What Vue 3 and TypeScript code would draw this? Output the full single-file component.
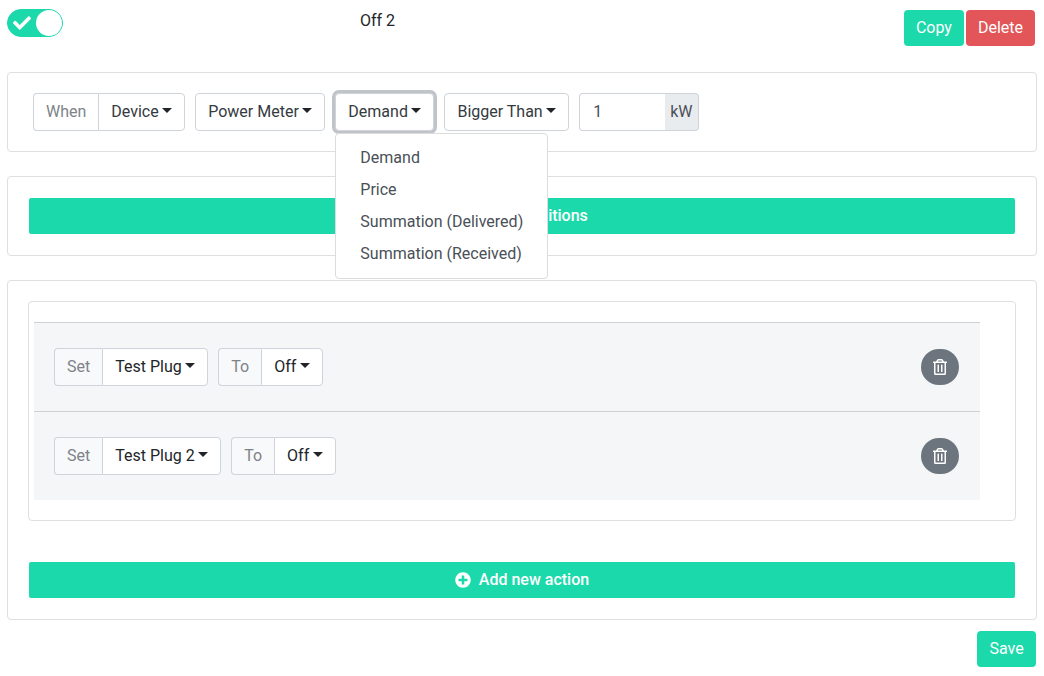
<script setup lang="ts">
interface Row { device: string }
const rows: Row[] = [{ device: 'Test Plug' }, { device: 'Test Plug 2' }]
const menu: string[] = ['Demand', 'Price', 'Summation (Delivered)', 'Summation (Received)']
</script>

<template>
  <div class="page">
    <header class="top">
      <div class="toggle">
        <svg class="check" viewBox="0 0 512 512" width="18" height="18"><path fill="#fff" d="M173.9 439.4 7.5 273c-10-10-10-26.200 0-36.200l36.200-36.200c10-10 26.200-10 36.200 0L192 312.700 432.100 72.600c10-10 26.200-10 36.200 0l36.200 36.200c10 10 10 26.200 0 36.200L210.100 439.400c-10 10-26.200 10-36.200 0z"/></svg>
        <span class="knob"></span>
      </div>
      <div class="title">Off 2</div>
      <div class="top-actions">
        <button class="btn green">Copy</button>
        <button class="btn red">Delete</button>
      </div>
    </header>

    <section class="card when">
      <div class="group">
        <span class="addon">When</span>
        <button class="sel joined">Device<i class="caret"></i></button>
      </div>
      <button class="sel">Power Meter<i class="caret"></i></button>
      <div class="drop">
        <button class="sel focused">Demand<i class="caret"></i></button>
        <ul class="menu">
          <li v-for="m in menu" :key="m">{{ m }}</li>
        </ul>
      </div>
      <button class="sel">Bigger Than<i class="caret"></i></button>
      <div class="group">
        <span class="value">1</span>
        <span class="unit">kW</span>
      </div>
    </section>

    <section class="card cond">
      <button class="wide">
        <svg viewBox="0 0 512 512" width="16" height="16"><path fill="#fff" d="M256 8C119 8 8 119 8 256s111 248 248 248 248-111 248-248S393 8 256 8zm144 276c0 6.600-5.400 12-12 12h-92v92c0 6.600-5.400 12-12 12h-56c-6.600 0-12-5.400-12-12v-92h-92c-6.600 0-12-5.400-12-12v-56c0-6.600 5.400-12 12-12h92v-92c0-6.600 5.400-12 12-12h56c6.600 0 12 5.400 12 12v92h92c6.600 0 12 5.400 12 12v56z"/></svg>
        Add conditions
      </button>
    </section>

    <section class="card actions">
      <div class="inner">
        <div v-for="r in rows" :key="r.device" class="row">
          <div class="group">
            <span class="addon light">Set</span>
            <button class="sel joined dark">{{ r.device }}<i class="caret"></i></button>
          </div>
          <div class="group">
            <span class="addon light">To</span>
            <button class="sel joined dark">Off<i class="caret"></i></button>
          </div>
          <button class="trash" aria-label="Delete">
            <svg viewBox="0 0 448 512" width="14" height="16"><path fill="#fff" d="M268 416h24a12 12 0 0 0 12-12V188a12 12 0 0 0-12-12h-24a12 12 0 0 0-12 12v216a12 12 0 0 0 12 12zM432 80h-82.400l-34-56.700A48 48 0 0 0 274.400 0H173.600a48 48 0 0 0-41.200 23.300L98.400 80H16A16 16 0 0 0 0 96v16a16 16 0 0 0 16 16h16v336a48 48 0 0 0 48 48h288a48 48 0 0 0 48-48V128h16a16 16 0 0 0 16-16V96a16 16 0 0 0-16-16zM171.800 50.900A6 6 0 0 1 177 48h94a6 6 0 0 1 5.200 2.900L293.600 80H154.400zM368 464H80V128h288zm-212-48h24a12 12 0 0 0 12-12V188a12 12 0 0 0-12-12h-24a12 12 0 0 0-12 12v216a12 12 0 0 0 12 12z"/></svg>
          </button>
        </div>
      </div>
      <button class="wide add-action">
        <svg viewBox="0 0 512 512" width="16" height="16"><path fill="#fff" d="M256 8C119 8 8 119 8 256s111 248 248 248 248-111 248-248S393 8 256 8zm144 276c0 6.600-5.400 12-12 12h-92v92c0 6.600-5.400 12-12 12h-56c-6.600 0-12-5.400-12-12v-92h-92c-6.600 0-12-5.400-12-12v-56c0-6.600 5.400-12 12-12h92v-92c0-6.600 5.400-12 12-12h56c6.600 0 12 5.400 12 12v92h92c6.600 0 12 5.400 12 12v56z"/></svg>
        Add new action
      </button>
    </section>

    <footer class="foot">
      <button class="btn green save">Save</button>
    </footer>
  </div>
</template>

<style>
html, body { margin: 0; background: #fff; }
</style>

<style scoped>
* { box-sizing: border-box; }
.page {
  width: 1044px;
  height: 676px;
  overflow: hidden;
  padding: 9px 7px 0;
  font-family: Roboto, "Liberation Sans", sans-serif;
  font-size: 16px;
  line-height: 24px;
  color: #212529;
}
button { font: inherit; cursor: pointer; }
.top { display: flex; height: 63px; align-items: flex-start; }
.toggle {
  width: 56px;
  height: 28px;
  border-radius: 14px;
  background: #1bd9ab;
  border: 1px solid #1bd9ab;
  display: flex;
  align-items: center;
  justify-content: space-between;
  padding: 0 0 0 5px;
}
.knob { width: 26px; height: 26px; border-radius: 50%; background: #fff; }
.title { margin-left: 297px; line-height: 24px; }
.top-actions { margin: 1px 2px 0 auto; display: flex; gap: 2px; }
.btn {
  height: 36px;
  border: 0;
  border-radius: 4px;
  color: #fff;
  padding: 0 12px;
}
.save { width: 59px; }
.green { background: #1bd9ab; }
.red { background: #e25558; }
.card {
  width: 1030px;
  border: 1px solid #dfdfdf;
  border-radius: 4px;
  background: #fff;
}
.when {
  height: 80px;
  margin-bottom: 24px;
  padding: 20px 25px;
  display: flex;
  gap: 10px;
  align-items: flex-start;
}
.group { display: flex; height: 38px; }
.addon {
  display: flex;
  align-items: center;
  height: 38px;
  padding: 0 12px;
  border: 1px solid #ced4da;
  border-right: 0;
  border-radius: 4px 0 0 4px;
  color: #7d8389;
}
.addon.light { background: #f8f9fa; }
.sel {
  display: flex;
  align-items: center;
  height: 38px;
  padding: 0 12px;
  border: 1px solid #ced4da;
  border-radius: 4px;
  background: #fff;
  color: #343a40;
}
.sel.joined { border-radius: 0 4px 4px 0; }
.sel.dark { color: #212529; }
.sel.focused { box-shadow: 0 0 0 3px rgba(130, 138, 145, 0.5); }
.caret {
  margin-left: 3.5px;
  margin-bottom: 3px;
  width: 0;
  height: 0;
  border-top: 5px solid #212529;
  border-left: 5px solid transparent;
  border-right: 5px solid transparent;
}
.drop { position: relative; height: 38px; }
.menu {
  position: absolute;
  z-index: 2;
  top: 40px;
  left: 0;
  width: 213px;
  margin: 0;
  padding: 8px 0;
  list-style: none;
  background: #fff;
  border: 1px solid #dcdcdc;
  border-radius: 4px;
  color: #495057;
}
.menu li { height: 32px; padding: 4px 24px; white-space: nowrap; }
.value {
  display: flex;
  align-items: center;
  width: 86px;
  height: 38px;
  padding: 0 13px;
  border: 1px solid #ced4da;
  border-right: 0;
  border-radius: 4px 0 0 4px;
  color: #495057;
}
.unit {
  display: flex;
  align-items: center;
  height: 38px;
  padding: 0 5px;
  background: #e9ecef;
  border: 1px solid #ced4da;
  border-left: 0;
  border-radius: 0 4px 4px 0;
  color: #495057;
}
.cond {
  height: 80px;
  margin-bottom: 24px;
  padding: 21px;
}
.wide {
  width: 986px;
  height: 36px;
  display: flex;
  align-items: center;
  justify-content: center;
  gap: 8px;
  border: 0;
  border-radius: 2px;
  background: #1bd9ab;
  color: #fff;
  font-weight: 500;
}
.actions {
  height: 340px;
  padding: 20px 20px 0 20px;
}
.inner {
  width: 988px;
  height: 220px;
  padding: 20px 5px 0;
  border: 1px solid #dfdfdf;
  border-radius: 4px;
}
.row {
  width: 946px;
  height: 89px;
  display: flex;
  align-items: center;
  gap: 10px;
  padding: 0 21px 0 20px;
  background: #f4f6f8;
  border-top: 1px solid #ced0d2;
}
.trash {
  margin-left: auto;
  width: 38px;
  height: 36px;
  border: 0;
  border-radius: 18px;
  background: #6c757d;
  display: flex;
  align-items: center;
  justify-content: center;
  padding: 0;
}
.add-action { margin: 41px 0 0 1px; }
.foot { display: flex; justify-content: flex-end; margin-top: 11px; width: 1029px; }
</style>
